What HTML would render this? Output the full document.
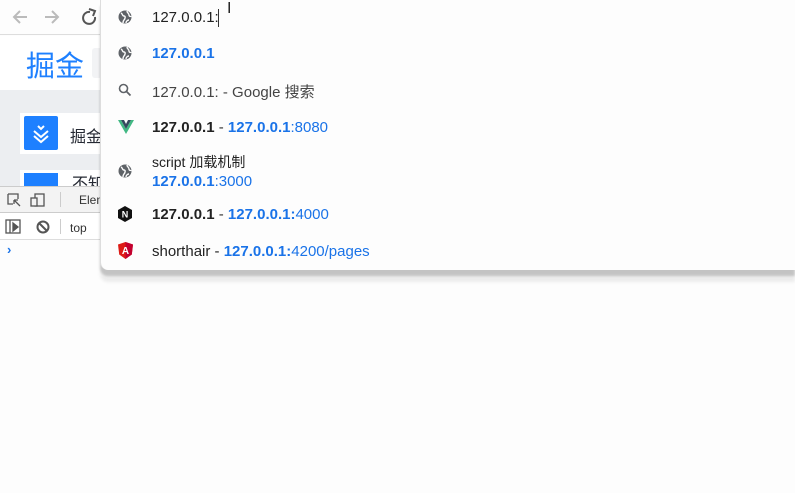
<!DOCTYPE html>
<html><head><meta charset="utf-8"><style>
*{margin:0;padding:0;box-sizing:border-box}
body{width:795px;height:493px;background:#fdfdfd;position:relative;overflow:hidden;font-family:"Liberation Sans","Noto Sans CJK SC",sans-serif}
.abs{position:absolute}
.dd{left:100px;top:0;width:695px;height:270px;background:#fdfdfd;border-left:1px solid #ddd;border-bottom-left-radius:8px;box-shadow:0 6px 2px rgba(0,0,0,.17),0 12px 3px rgba(0,0,0,.07)}
.row{position:absolute;left:0;width:695px;font-size:15px;color:#333}
.row .t{position:absolute;left:51px}
.b{font-weight:bold;color:#222}
.bl{color:#1a73e8}
.blb{color:#1a73e8;font-weight:bold}
.ic{position:absolute;left:17px}
</style></head><body>
<div class="abs" style="left:0;top:0;width:100px;height:35px;background:#fdfdfd;border-bottom:1px solid #ddd"></div>
<svg class="abs" style="left:10px;top:7px" width="90" height="20" viewBox="0 0 90 20" fill="none" stroke-width="2">
<path d="M17 10H4M10 4L4 10L10 16" stroke="#bbb"/>
<path d="M35 10H48M42 4L48 10L42 16" stroke="#bbb"/>
<path d="M80 5A6 6 0 1 0 85 10" stroke="#555"/><path d="M79 2L85 4L83 9" stroke="#555" fill="none"/>
</svg>
<div class="abs" style="left:0;top:36px;width:100px;height:54px;background:#fff"></div>
<div class="abs" style="left:26px;top:42px;font-size:29px;color:#1e80ff;font-family:'Noto Sans CJK SC',sans-serif;line-height:44px">掘金</div>
<div class="abs" style="left:92px;top:48px;width:10px;height:30px;background:#f2f3f5;border-radius:3px"></div>
<div class="abs" style="left:0;top:90px;width:100px;height:96px;background:#eceef1"></div>
<div class="abs" style="left:20px;top:113px;width:80px;height:41px;background:#fff"></div>
<div class="abs" style="left:24px;top:116px;width:34px;height:34px;background:#1e80ff;border-radius:2px"></div>
<svg class="abs" style="left:24px;top:116px" width="34" height="34"><path d="M10 15l7 6 7-6M10 20l7 6 7-6" stroke="#fff" stroke-width="2" fill="none"/><path d="M14 10l3 3 3-3" stroke="#fff" stroke-width="2" fill="none"/></svg>
<div class="abs" style="left:70px;top:123px;font-size:16px;color:#252933">掘金</div>
<div class="abs" style="left:20px;top:170px;width:80px;height:16px;background:#fff"></div>
<div class="abs" style="left:24px;top:173px;width:34px;height:13px;background:#1e80ff"></div>
<div class="abs" style="left:72px;top:174px;font-size:16px;color:#252933;height:12px;overflow:hidden;line-height:22px">不知</div>
<div class="abs" style="left:0;top:186px;width:100px;height:27px;background:#f3f3f3;border-top:1px solid #ccc;border-bottom:1px solid #ccc"></div>
<svg class="abs" style="left:6px;top:192px" width="45" height="16" fill="none" stroke="#555" stroke-width="1.3"><path d="M2 2h10v5M2 2v10h5"/><path d="M8 8l6 6M8 8h4M8 8v4"/><rect x="29" y="2" width="9" height="12"/><rect x="25" y="6" width="6" height="8" fill="#f3f3f3"/></svg>
<div class="abs" style="left:60px;top:192px;width:1px;height:15px;background:#ccc"></div>
<div class="abs" style="left:79px;top:193px;font-size:12px;color:#333">Elem</div>
<div class="abs" style="left:0;top:213px;width:100px;height:27px;background:#fff;border-bottom:1px solid #ddd"></div>
<svg class="abs" style="left:5px;top:219px" width="50" height="16" fill="none" stroke="#555" stroke-width="1.3"><rect x="1" y="1" width="14" height="13"/><path d="M5 1v13"/><path d="M8 4l5 4-5 4z" fill="#555"/><circle cx="38" cy="8" r="5.5" stroke-width="2"/><path d="M34 4l8 8" stroke-width="2"/></svg>
<div class="abs" style="left:60px;top:219px;width:1px;height:15px;background:#ccc"></div>
<div class="abs" style="left:70px;top:221px;font-size:12px;color:#333">top</div>
<div class="abs" style="left:7px;top:242px;font-size:13px;color:#1a73e8;font-weight:bold">›</div>
<div class="abs dd">
 <div class="row" style="top:0;height:35px">
  <svg class="ic" style="top:10px" width="14" height="14" viewBox="0 0 14 14"><circle cx="7" cy="7" r="6.5" fill="#5f6368"/><path d="M3 3c2 1 1 3 3 3s1 3 0 4c-1 1-1 2-1 3M9 1c0 2 2 2 2 4s2 1 2 2M8 13c0-2 2-3 3-3" stroke="#fdfdfd" stroke-width="1.4" fill="none"/></svg>
  <span class="t" style="top:9px;color:#222">127.0.0.1:</span>
  <div class="abs" style="left:117px;top:9px;width:1px;height:18px;background:#333"></div>
  <div class="abs" style="left:126px;top:0px;font-size:16px;color:#222">I</div>
 </div>
 <div class="row" style="top:36px;height:36px">
  <svg class="ic" style="top:10px" width="14" height="14" viewBox="0 0 14 14"><circle cx="7" cy="7" r="6.5" fill="#5f6368"/><path d="M3 3c2 1 1 3 3 3s1 3 0 4c-1 1-1 2-1 3M9 1c0 2 2 2 2 4s2 1 2 2M8 13c0-2 2-3 3-3" stroke="#fdfdfd" stroke-width="1.4" fill="none"/></svg>
  <span class="t blb" style="top:9px">127.0.0.1</span>
 </div>
 <div class="row" style="top:73px;height:36px">
  <svg class="ic" style="top:10px" width="14" height="14"><circle cx="5.5" cy="5.5" r="4" stroke="#5f6368" stroke-width="1.6" fill="none"/><path d="M8.5 8.5l4 4" stroke="#5f6368" stroke-width="1.8"/></svg>
  <span class="t" style="top:8px;color:#444">127.0.0.1: - Google 搜索</span>
 </div>
 <div class="row" style="top:110px;height:36px">
  <svg class="ic" style="top:10px" width="16" height="14" viewBox="0 0 16 14"><path d="M0 0h3l5 9 5-9h3L8 14z" fill="#41b883"/><path d="M3 0h3l2 4 2-4h3L8 9z" fill="#35495e"/></svg>
  <span class="t" style="top:9px"><span class="b">127.0.0.1</span> - <span class="blb">127.0.0.1</span><span class="bl">:8080</span></span>
 </div>
 <div class="row" style="top:147px;height:48px">
  <svg class="ic" style="top:17px" width="14" height="14" viewBox="0 0 14 14"><circle cx="7" cy="7" r="6.5" fill="#5f6368"/><path d="M3 3c2 1 1 3 3 3s1 3 0 4c-1 1-1 2-1 3M9 1c0 2 2 2 2 4s2 1 2 2M8 13c0-2 2-3 3-3" stroke="#fdfdfd" stroke-width="1.4" fill="none"/></svg>
  <span class="t" style="top:5px;font-size:14px;color:#222">script 加载机制</span>
  <span class="t" style="top:26px"><span class="blb">127.0.0.1</span><span class="bl">:3000</span></span>
 </div>
 <div class="row" style="top:197px;height:36px">
  <svg class="ic" style="top:9px" width="14" height="16" viewBox="0 0 14 16"><path d="M7 0l7 4v8l-7 4-7-4V4z" fill="#111"/><text x="7" y="11.5" fill="#fff" font-size="9" font-weight="bold" text-anchor="middle" font-family="Liberation Sans">N</text></svg>
  <span class="t" style="top:9px"><span class="b">127.0.0.1</span> - <span class="blb">127.0.0.1:</span><span class="bl">4000</span></span>
 </div>
 <div class="row" style="top:234px;height:36px">
  <svg class="ic" style="top:8px" width="15" height="17" viewBox="0 0 15 17"><path d="M7.5 0l7.5 2.5-1.2 10L7.5 17 1.2 12.5 0 2.5z" fill="#dd1b16"/><path d="M7.5 0v17l6.3-4.5 1.2-10z" fill="#c3002f"/><text x="7.5" y="12" fill="#fff" font-size="10" font-weight="bold" text-anchor="middle" font-family="Liberation Sans">A</text></svg>
  <span class="t" style="top:9px;color:#222">shorthair - <span class="blb">127.0.0.1:</span><span class="bl">4200/pages</span></span>
 </div>
</div>
</body></html>
